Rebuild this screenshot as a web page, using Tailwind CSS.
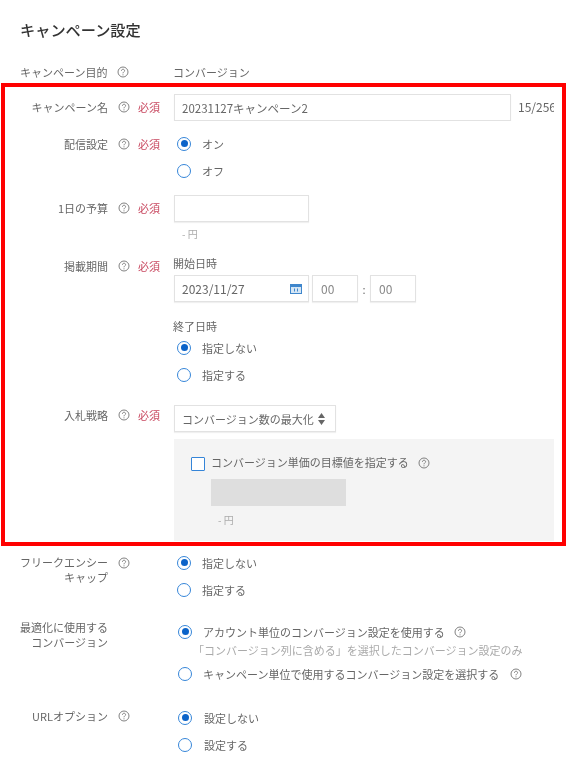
<!DOCTYPE html>
<html lang="ja">
  <head>
    <meta charset="utf-8" />
    <title>キャンペーン設定</title>
    <script src="https://cdn.jsdelivr.net/npm/@tailwindcss/browser@4"></script>
  </head>
  <body class="bg-white text-[11px] leading-4 text-[#666] font-['Noto_Sans_CJK_JP','Noto_Sans',sans-serif]">
    <!-- shared icons -->
    <svg class="hidden">
      <symbol id="help" viewBox="0 0 12 12">
        <circle cx="6" cy="6" r="5" fill="none" stroke="#808080" stroke-width="1" />
        <path d="M4.4 4.8c0-2.1 3.2-2.1 3.2-.1 0 1.2-1.6 1.2-1.6 2.6" fill="none" stroke="#808080" stroke-width="1" />
        <circle cx="6" cy="8.8" r=".6" fill="#808080" />
      </symbol>
    </svg>

    <div class="w-[566px] h-[783px] overflow-hidden blur-[0.35px]">
      <h1 class="pt-[19px] pl-5 text-[15.2px] leading-5 font-medium text-[#333]">キャンペーン設定</h1>

      <div class="flex mt-[25px] pl-5">
        <div class="flex w-[154px]">
          <span>キャンペーン目的</span>
          <svg class="w-3 h-3 mt-0.5 ml-[10px]"><use href="#help" /></svg>
        </div>
        <span class="-ml-px">コンバージョン</span>
      </div>

      <!-- highlighted block -->
      <div class="ml-px mt-[3px] w-[565px] border-4 border-[#f00] pl-[15px] pr-2 pb-px">
        <div class="flex mt-[7px] overflow-hidden">
          <div class="flex w-[154px] shrink-0 pt-[5px]">
            <span class="w-[88px] text-right">キャンペーン名</span>
            <svg class="w-3 h-3 mt-0.5 ml-[10px]"><use href="#help" /></svg>
            <span class="ml-2 text-[#c8475f]">必須</span>
          </div>
          <div class="flex items-center h-[27px] w-[337px] shrink-0 px-[7px] border border-[#e2e2e2] shadow-[0_1px_1px_rgba(0,0,0,0.06)] text-[11.5px]">20231127キャンペーン2</div>
          <span class="ml-[7px] mt-[5px] whitespace-nowrap text-xs">15/256</span>
        </div>

        <div class="flex mt-2.5">
          <div class="flex w-[154px] shrink-0 pt-[5px]">
            <span class="w-[88px] text-right">配信設定</span>
            <svg class="w-3 h-3 mt-0.5 ml-[10px]"><use href="#help" /></svg>
            <span class="ml-2 text-[#c8475f]">必須</span>
          </div>
          <div class="pl-[3px] -mt-px">
            <label class="flex items-center gap-[11px] h-[27px]">
              <span class="flex items-center justify-center w-3.5 h-3.5 rounded-full border-[1.5px] border-[#3585d8]"><span class="w-[7px] h-[7px] rounded-full bg-[#0b63c9]"></span></span>オン
            </label>
            <label class="flex items-center gap-[11px] h-[27px]">
              <span class="w-3.5 h-3.5 rounded-full border-[1.5px] border-[#3585d8]"></span>オフ
            </label>
          </div>
        </div>

        <div class="flex mt-[11px]">
          <div class="flex w-[154px] shrink-0 pt-[5px]">
            <span class="w-[88px] text-right">1日の予算</span>
            <svg class="w-3 h-3 mt-0.5 ml-[10px]"><use href="#help" /></svg>
            <span class="ml-2 text-[#c8475f]">必須</span>
          </div>
          <div>
            <div class="h-[27px] w-[135px] border border-[#e2e2e2] shadow-[0_1px_1px_rgba(0,0,0,0.06)]"></div>
            <p class="mt-1 pl-2 text-[10px] text-[#aaa]">- 円</p>
          </div>
        </div>

        <div class="flex mt-[11px]">
          <div class="flex w-[154px] shrink-0 pt-[5px]">
            <span class="w-[88px] text-right">掲載期間</span>
            <svg class="w-3 h-3 mt-0.5 ml-[10px]"><use href="#help" /></svg>
            <span class="ml-2 text-[#c8475f]">必須</span>
          </div>
          <div class="pt-0.5">
            <p class="-ml-px">開始日時</p>
            <div class="flex items-center mt-1">
              <div class="flex items-center justify-between h-[27px] w-[135px] pl-[7px] pr-[6px] border border-[#e2e2e2] shadow-[0_1px_1px_rgba(0,0,0,0.06)] text-xs">
                2023/11/27
                <svg class="w-3 h-[10px]" viewBox="0 0 12 10">
                  <rect width="12" height="10" fill="#3f86cc" />
                  <rect x="1" y="3" width="10" height="6" fill="#d5e6f5" />
                  <path d="M4 4.5h1v3H4zM7 4.5h1v3H7z" fill="#3f86cc" />
                </svg>
              </div>
              <div class="flex items-center h-[27px] w-[46px] ml-[3px] px-2 border border-[#e2e2e2] shadow-[0_1px_1px_rgba(0,0,0,0.06)] text-xs text-[#888]">00</div>
              <span class="w-3 text-center">:</span>
              <div class="flex items-center h-[27px] w-[46px] px-2 border border-[#e2e2e2] shadow-[0_1px_1px_rgba(0,0,0,0.06)] text-xs text-[#888]">00</div>
            </div>
            <p class="mt-4 -ml-px">終了日時</p>
            <div class="pl-[3px]">
              <label class="flex items-center gap-[11px] h-[27px]">
                <span class="flex items-center justify-center w-3.5 h-3.5 rounded-full border-[1.5px] border-[#3585d8]"><span class="w-[7px] h-[7px] rounded-full bg-[#0b63c9]"></span></span>指定しない
              </label>
              <label class="flex items-center gap-[11px] h-[27px]">
                <span class="w-3.5 h-3.5 rounded-full border-[1.5px] border-[#3585d8]"></span>指定する
              </label>
            </div>
          </div>
        </div>

        <div class="flex mt-[17px]">
          <div class="flex w-[154px] shrink-0 pt-0.5">
            <span class="w-[88px] text-right">入札戦略</span>
            <svg class="w-3 h-3 mt-0.5 ml-[10px]"><use href="#help" /></svg>
            <span class="ml-2 text-[#c8475f]">必須</span>
          </div>
          <div class="flex-1">
            <div class="flex items-center justify-between h-[27px] w-[162px] pl-[7px] pr-[10px] border border-[#e2e2e2] shadow-[0_1px_1px_rgba(0,0,0,0.06)]">
              コンバージョン数の最大化
              <svg class="w-[7px] h-3" viewBox="0 0 7 12">
                <path d="M3.5 0 7 5H0zM0 7h7l-3.5 5z" fill="#666" />
              </svg>
            </div>
            <div class="mt-[7px] h-[102px] bg-[#f4f4f4] pt-[15px] pl-[17px]">
              <div class="flex items-start">
                <span class="w-3.5 h-3.5 mt-[3px] border-[1.5px] border-[#3585d8] rounded-[1px] bg-white"></span>
                <span class="ml-[6px]">コンバージョン単価の目標値を指定する</span>
                <svg class="w-3 h-3 mt-[3px] ml-[9px]"><use href="#help" /></svg>
              </div>
              <div class="ml-5 mt-2 h-[27px] w-[135px] bg-[#dedede]"></div>
              <p class="ml-[27px] mt-1.5 text-[10px] text-[#aaa]">- 円</p>
            </div>
          </div>
        </div>
      </div>

      <!-- rest of the form -->
      <div class="pl-5 pr-3">
        <div class="flex mt-1">
          <div class="flex w-[154px] shrink-0 pt-[5px]">
            <span class="w-[88px] text-right leading-[15px]">フリークエンシー<br />キャップ</span>
            <svg class="w-3 h-3 mt-0.5 ml-[10px]"><use href="#help" /></svg>
          </div>
          <div class="pl-[3px] -mt-px">
            <label class="flex items-center gap-[11px] h-[27px]">
              <span class="flex items-center justify-center w-3.5 h-3.5 rounded-full border-[1.5px] border-[#3585d8]"><span class="w-[7px] h-[7px] rounded-full bg-[#0b63c9]"></span></span>指定しない
            </label>
            <label class="flex items-center gap-[11px] h-[27px]">
              <span class="w-3.5 h-3.5 rounded-full border-[1.5px] border-[#3585d8]"></span>指定する
            </label>
          </div>
        </div>

        <div class="flex mt-3">
          <div class="flex w-[154px] shrink-0 pt-[5px]">
            <span class="w-[88px] text-right leading-[15px]">最適化に使用する<br />コンバージョン</span>
          </div>
          <div class="pl-1 pt-[3px]">
            <label class="flex items-center gap-[11px] h-[27px]">
              <span class="flex items-center justify-center w-3.5 h-3.5 rounded-full border-[1.5px] border-[#3585d8]"><span class="w-[7px] h-[7px] rounded-full bg-[#0b63c9]"></span></span>アカウント単位のコンバージョン設定を使用する
              <svg class="w-3 h-3 -ml-[2px]"><use href="#help" /></svg>
            </label>
            <p class="-mt-[3px] ml-[15px] text-[#aaa] whitespace-nowrap">「コンバージョン列に含める」を選択したコンバージョン設定のみ</p>
            <label class="flex items-center gap-[11px] h-[27px] mt-[2px]">
              <span class="w-3.5 h-3.5 rounded-full border-[1.5px] border-[#3585d8]"></span>キャンペーン単位で使用するコンバージョン設定を選択する
              <svg class="w-3 h-3"><use href="#help" /></svg>
            </label>
          </div>
        </div>

        <div class="flex mt-4">
          <div class="flex w-[154px] shrink-0 pt-[5px]">
            <span class="w-[88px] text-right">URLオプション</span>
            <svg class="w-3 h-3 mt-0.5 ml-[10px]"><use href="#help" /></svg>
          </div>
          <div class="pl-1 pt-px">
            <label class="flex items-center gap-3 h-[27px]">
              <span class="flex items-center justify-center w-3.5 h-3.5 rounded-full border-[1.5px] border-[#3585d8]"><span class="w-[7px] h-[7px] rounded-full bg-[#0b63c9]"></span></span>設定しない
            </label>
            <label class="flex items-center gap-3 h-[27px]">
              <span class="w-3.5 h-3.5 rounded-full border-[1.5px] border-[#3585d8]"></span>設定する
            </label>
          </div>
        </div>
      </div>
    </div>
  </body>
</html>
